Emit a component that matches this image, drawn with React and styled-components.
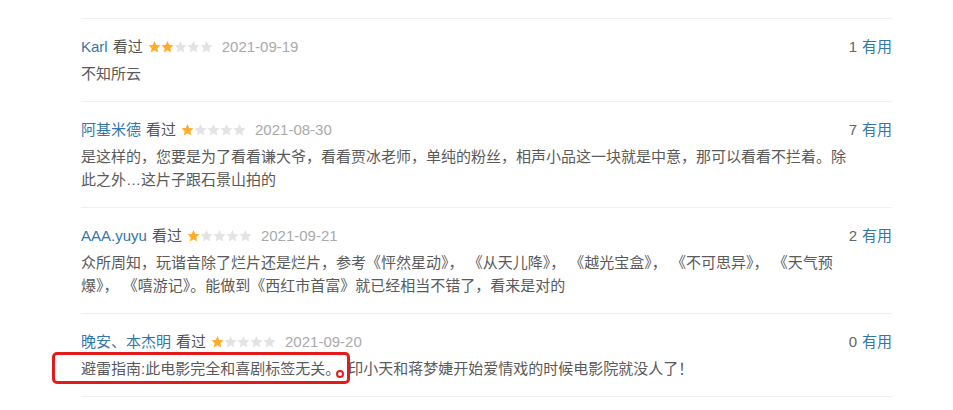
import React from 'react';
import styled, { createGlobalStyle } from 'styled-components';

const Global = createGlobalStyle`
  body {
    margin: 0;
    background: #fff;
    font-family: "Liberation Sans", "Noto Sans CJK SC", sans-serif;
  }
`

const List = styled.div`
  width: 811px;
  margin: 18px 0 0 81px;
  border-top: 1px solid #f0f0f0;
`

const Row = styled.div`
  padding: 17px 0 16px;
  border-bottom: 1px solid #f0f0f0;
`

const Header = styled.div`
  display: flex;
  align-items: center;
  justify-content: space-between;
  height: 22px;
  line-height: 22px;
  font-size: 15px;
`

const Info = styled.div`
  display: flex;
  align-items: center;
`

const Name = styled.a`
  color: #3377aa;
  text-decoration: none;
  margin-right: 5px;
`

const Watched = styled.span`
  color: #555;
  margin-right: 5px;
`

const Stars = styled.span`
  display: flex;
  width: 65px;
  margin-right: 9px;
`

const Time = styled.span`
  color: #aaa;
`

const Votes = styled.div`
  color: #666;
`

const Useful = styled.a`
  color: #3377aa;
  margin-left: 5px;
`

const Content = styled.p`
  margin: 4px 0 0;
  font-size: 15px;
  line-height: 23px;
  color: #5a5a5a;
`

const Mark = styled.span`
  position: relative;
  display: inline-block;
  margin-right: 8px;
  &::before {
    content: '';
    position: absolute;
    top: -5px;
    bottom: -4px;
    left: -29px;
    right: -10px;
    border: 3px solid #e31b1b;
    border-radius: 5px;
  }
  &::after {
    content: '';
    position: absolute;
    right: -4px;
    bottom: 2px;
    width: 4px;
    height: 4px;
    border: 2px solid #e31b1b;
    border-radius: 50%;
  }
`

const Star = ({ on }) => (
  <svg width="13" height="12" viewBox="0 0 13 12">
    <path
      d="M6.5 0l1.8 3.9 4.2 0.45-3.15 2.85 0.9 4.2L6.5 9.25 2.75 11.4l0.9-4.2L0.5 4.35l4.2-0.45z"
      fill={on ? '#ffac2d' : '#e3e3e3'}
    />
  </svg>
)

const reviews = [
  { name: 'Karl', rating: 2, date: '2021-09-19', votes: 1, lines: ['不知所云'] },
  {
    name: '阿基米德', rating: 1, date: '2021-08-30', votes: 7,
    lines: [
      '是这样的，您要是为了看看谦大爷，看看贾冰老师，单纯的粉丝，相声小品这一块就是中意，那可以看看不拦着。除',
      '此之外…这片子跟石景山拍的',
    ],
  },
  {
    name: 'AAA.yuyu', rating: 1, date: '2021-09-21', votes: 2,
    lines: [
      '众所周知，玩谐音除了烂片还是烂片，参考《怦然星动》， 《从天儿降》， 《越光宝盒》， 《不可思异》， 《天气预',
      '爆》， 《嘻游记》。能做到《西红市首富》就已经相当不错了，看来是对的',
    ],
  },
  {
    name: '晚安、本杰明', rating: 1, date: '2021-09-20', votes: 0,
    mark: '避雷指南:此电影完全和喜剧标签无关。',
    lines: ['印小天和蒋梦婕开始爱情戏的时候电影院就没人了！'],
  },
]

const Review = ({ review }) => (
  <Row>
    <Header>
      <Info>
        <Name href="#">{review.name}</Name>
        <Watched>看过</Watched>
        <Stars>
          {[1, 2, 3, 4, 5].map(i => <Star key={i} on={i <= review.rating} />)}
        </Stars>
        <Time>{review.date}</Time>
      </Info>
      <Votes>
        {review.votes}
        <Useful>有用</Useful>
      </Votes>
    </Header>
    <Content>
      {review.mark && <Mark>{review.mark}</Mark>}
      {review.lines.map((line, i) => (
        <React.Fragment key={i}>
          {i > 0 && <br />}
          {line}
        </React.Fragment>
      ))}
    </Content>
  </Row>
)

export default function App() {
  return (
    <>
      <Global />
      <List>
        {reviews.map(r => <Review key={r.name} review={r} />)}
      </List>
    </>
  )
}
